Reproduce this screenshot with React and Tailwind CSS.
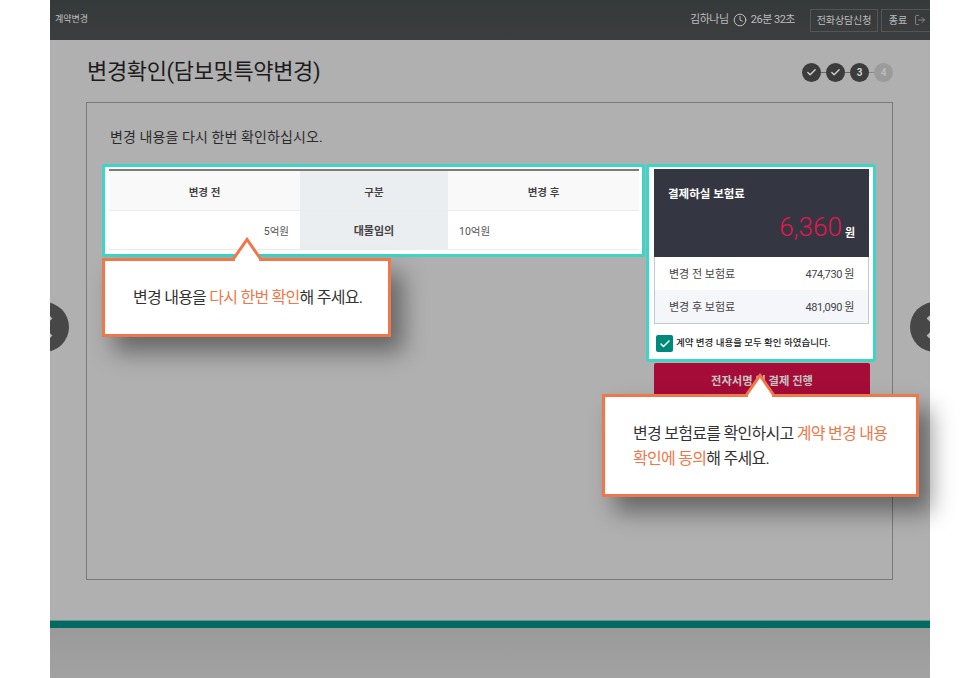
import React from "react";
import { Check, Clock, LogOut } from "lucide-react";

const font = "[font-family:Roboto,'Noto_Sans_CJK_KR',sans-serif]";

function Step({ done, n, dim }) {
  return (
    <div className={`flex h-[19px] w-[19px] items-center justify-center rounded-full text-[10px] font-bold ${dim ? "bg-[#9b9b9b] text-[#bcbcbc]" : "bg-[#3c3c3c] text-[#d0d0d0]"}`}>
      {done ? <Check size={11} strokeWidth={3} className="text-[#d0d0d0]" /> : n}
    </div>
  );
}

function Arrow({ className }) {
  return (
    <svg width="32" height="25" viewBox="0 0 32 25" className={`absolute ${className}`}>
      <path d="M2 22.5 L16 2.5 L30 22.5" fill="#ffffff" stroke="#f0774a" strokeWidth="3" />
      <rect x="4" y="22" width="24" height="3" fill="#ffffff" />
    </svg>
  );
}

function Row({ label, value, alt }) {
  return (
    <div className={`flex h-[33px] items-center justify-between px-[14px] pt-[4px] text-[11px] text-[#444] ${alt ? "bg-[#f5f6fa]" : "bg-white"}`}>
      <span>{label}</span>
      <span className="tracking-[-0.4px]">{value}</span>
    </div>
  );
}

function NavCircle({ right }) {
  return (
    <svg width="50" height="50" viewBox="0 0 50 50" className={`shrink-0 ${right ? "" : "-ml-[31px]"}`}>
      <circle cx="25" cy="25" r="25" fill="#474747" />
      <path d={right ? "M18 15 L28 25 L18 35" : "M32 15 L22 25 L32 35"} fill="none" stroke="#b8b8b8" strokeWidth="4" />
    </svg>
  );
}

export default function App() {
  return (
    <div className={`h-[678px] w-[980px] overflow-hidden bg-white pl-[50px] ${font}`}>
      <div className="relative flex h-[678px] w-[880px] flex-col">
        <header className="flex h-10 shrink-0 items-center justify-between bg-gradient-to-b from-[#343a3a] to-[#3d3d3e] pl-[5px]">
          <span className="text-[9px] text-[#c0c0c0]">계약변경</span>
          <div className="flex items-center text-[#bcbcbc]">
            <span className="text-[11px] tracking-[-0.4px]">김하나님</span>
            <Clock size={14} strokeWidth={1.6} className="ml-[4px] text-[#c4c4c4]" />
            <span className="ml-[4px] text-[11px] tracking-[-0.5px]">26분 32초</span>
            <span className="ml-[15px] flex h-[23px] w-[68px] items-center justify-center border border-[#555] text-[10px] tracking-[-0.1px]">전화상담신청</span>
            <span className="ml-[3px] flex h-[23px] w-[49px] items-center justify-center gap-[7px] border border-r-0 border-[#555] pl-[3px] text-[10px]">
              종료 <LogOut size={12} strokeWidth={1.4} className="text-[#a0a0a0]" />
            </span>
          </div>
        </header>

        <main className="relative h-[580px] shrink-0 bg-[#b0b0b0] pl-[36px] pr-[37px]">
          <div className="flex h-[62px] items-center justify-between pl-px pt-[2px]">
            <h1 className="text-[22px] font-normal leading-none tracking-[-0.35px] text-[#1c1c1c]">변경확인(담보및특약변경)</h1>
            <div className="flex items-center">
              <Step done />
              <span className="h-px w-[5px] bg-[#6a6a6a]" />
              <Step done />
              <span className="h-px w-[5px] bg-[#6a6a6a]" />
              <Step n="3" />
              <span className="h-px w-[5px] bg-[#8a8a8a]" />
              <Step n="4" dim />
            </div>
          </div>

          <section className="h-[478px] border border-[#7a7a7a] pl-[15px] pr-[16px]">
            <p className="pl-[8px] pt-[24px] text-[14px] leading-5 tracking-[0.1px] text-[#2b2b2b]">변경 내용을 다시 한번 확인하십시오.</p>
            <div className="mt-[17px] flex items-start gap-px">
              <div className="h-[93px] w-[543px] shrink-0 rounded-[2px] border-[3px] border-[#3dd6c6] bg-white pl-[4px] pr-[3px] pt-[2px]">
                <div className="border-t-2 border-[#7b7b7b]">
                  <div className="grid grid-cols-[191px_148px_191px] border-b border-[#ececec] text-[10.5px] font-bold text-[#444]">
                    <div className="flex h-[39px] items-center justify-center bg-[#f9f9f9] pt-[4px]">변경 전</div>
                    <div className="flex h-[39px] items-center justify-center bg-[#ebeef1] pt-[4px]">구분</div>
                    <div className="flex h-[39px] items-center justify-center bg-[#f9f9f9] pt-[4px]">변경 후</div>
                  </div>
                  <div className="grid grid-cols-[191px_148px_191px] border-b border-[#ececec] text-[10.5px] text-[#555]">
                    <div className="flex h-[38px] items-center justify-end pr-[11px] pt-[4px]">5억원</div>
                    <div className="flex h-[38px] items-center justify-center bg-[#ebeef1] pt-[4px] text-[11px] font-bold text-[#444]">대물임의</div>
                    <div className="flex h-[38px] items-center pl-[11px] pt-[4px]">10억원</div>
                  </div>
                </div>
              </div>

              <div className="w-[230px] shrink-0">
                <div className="h-[198px] rounded-[3px] border-[3px] border-[#3dd6c6] bg-white pl-[5px] pr-[4px] pt-[2px]">
                  <div className="flex h-[88px] flex-col justify-between bg-[#343741] px-[14px] pb-[16px] pt-[16px] text-white">
                    <span className="text-[11.5px] font-bold leading-[18px]">결제하실 보험료</span>
                    <div className="flex items-baseline justify-end">
                      <span className="text-[26px] font-light leading-[26px] text-[#e6144f]">6,360</span>
                      <span className="ml-[3px] translate-y-px text-[11px] font-bold">원</span>
                    </div>
                  </div>
                  <div className="border border-t-0 border-[#c8c8c8]">
                    <Row label="변경 전 보험료" value="474,730 원" />
                    <Row label="변경 후 보험료" value="481,090 원" alt />
                  </div>
                  <div className="flex items-center pl-[2px] pt-[11px]">
                    <span className="flex h-[17px] w-[17px] items-center justify-center rounded-[2px] bg-[#00897b]">
                      <Check size={12} strokeWidth={3} className="text-white" />
                    </span>
                    <span className="ml-[3px] text-[9.5px] font-medium tracking-[0px] text-[#222]">계약 변경 내용을 모두 확인 하였습니다.</span>
                  </div>
                </div>
                <button className="ml-[8px] mt-px flex h-[60px] w-[216px] justify-center rounded-t-[2px] bg-[#a50c38] pt-[10px] text-[11.3px] font-bold leading-[18px] text-[#c4c4c4]">
                  전자서명 및 결제 진행
                </button>
              </div>
            </div>
          </section>

          <div className="absolute left-0 top-[262px] flex h-[50px] w-[19px] overflow-hidden">
            <NavCircle />
          </div>
          <div className="absolute right-0 top-[262px] flex h-[50px] w-[20px] overflow-hidden">
            <NavCircle right />
          </div>
        </main>

        <div className="h-[8px] shrink-0 border-t border-[#6f8f8c] bg-[#016b63]" />
        <div className="h-[50px] shrink-0 bg-gradient-to-b from-[#9a9a9a] to-[#a2a2a2]" />

        <div className="absolute left-[52px] top-[258px] flex h-[79px] w-[289px] items-center border-[3px] border-[#f0774a] bg-white pl-[28px] text-[16px] tracking-[-0.75px] text-[#333] shadow-[12px_15px_22px_rgba(0,0,0,0.42)]">
          <Arrow className="left-[126px] top-[-24px]" />
          <span>변경 내용을 <span className="text-[#f0774a]">다시 한번 확인</span>해 주세요.</span>
        </div>

        <div className="absolute left-[552px] top-[394px] h-[103px] w-[317px] border-[3px] border-[#f0774a] bg-white pl-[28px] pt-[24px] text-[16px] leading-[25px] tracking-[-0.72px] text-[#333] shadow-[12px_15px_22px_rgba(0,0,0,0.42)]">
          <Arrow className="left-[139px] top-[-24px]" />
          <span>변경 보험료를 확인하시고 <span className="text-[#f0774a]">계약 변경 내용<br />확인에 동의</span>해 주세요.</span>
        </div>
      </div>
    </div>
  );
}
